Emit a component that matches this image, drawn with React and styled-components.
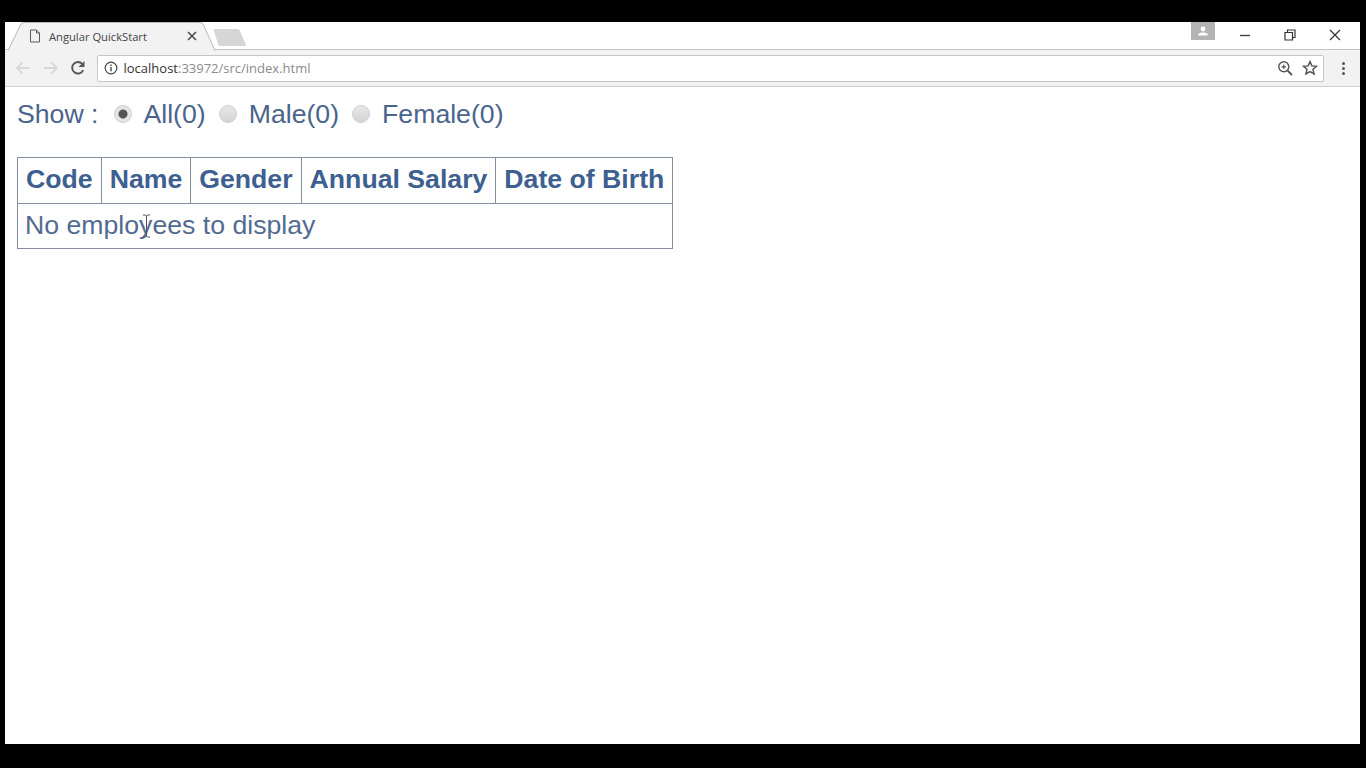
import React from 'react'
import styled, {createGlobalStyle} from 'styled-components'

const Global = createGlobalStyle`
html, body {
    margin: 0;
    height: 100%;
    background: #000;
    overflow: hidden;
}
#root {
    height: 100%;
}
`

function Radio({checked}) {
    return <RadioDot checked={checked} />
}

function App() {
    return (
        <Screen>
            <Global />
            <Browser>
                <TabStrip>
                    <Tab>
                        <TabShape width="208" height="29" viewBox="0 0 208 29">
                            <path d="M0 28.5 L13 2 Q14 0.5 15 0.5 L193 0.5 Q194 0.5 195 2 L207 28.5" fill="#f2f2f2" stroke="#b9b9b9" />
                        </TabShape>
                        <PageIcon width="12" height="14" viewBox="0 0 12 14">
                            <path d="M1.5 1h6l3 3v9h-9z M7.5 1v3h3" fill="none" stroke="#5a5a5a" strokeWidth="1" />
                        </PageIcon>
                        <TabTitle>Angular QuickStart</TabTitle>
                        <TabClose width="10" height="10" viewBox="0 0 10 10">
                            <path d="M1 1l8 8M9 1l-8 8" stroke="#4d4d4d" strokeWidth="1.6" />
                        </TabClose>
                    </Tab>
                    <NewTab width="36" height="20" viewBox="0 0 36 20">
                        <path d="M0.5 2 Q0.5 1 2 1 L25 1 Q26 1 26.5 2 L33 17 Q33.5 18 32 18 L7 18 Q6 18 5.5 17 Z" fill="#d6d6d6" />
                    </NewTab>
                    <Spacer />
                    <Profile>
                        <svg width="12" height="10" viewBox="0 0 12 10">
                            <circle cx="6" cy="3" r="2.4" fill="#fff" />
                            <path d="M1 9.5 Q1 6.5 6 6.5 Q11 6.5 11 9.5z" fill="#fff" />
                        </svg>
                    </Profile>
                    <WinButton>
                        <svg width="12" height="12" viewBox="0 0 12 12"><path d="M1 6.5h10" stroke="#444" strokeWidth="1.4" /></svg>
                    </WinButton>
                    <WinButton>
                        <svg width="12" height="12" viewBox="0 0 12 12">
                            <path d="M1 3.5h7.5v7.5H1z M3.5 3.5V1H11v7.5H8.5" fill="none" stroke="#333" strokeWidth="1.2" />
                        </svg>
                    </WinButton>
                    <WinButton>
                        <svg width="12" height="12" viewBox="0 0 12 12"><path d="M1 1l10 10M11 1L1 11" stroke="#333" strokeWidth="1.2" /></svg>
                    </WinButton>
                </TabStrip>
                <Toolbar>
                    <NavIcon width="16" height="14" viewBox="0 0 16 14">
                        <path d="M15 7H2M7.5 1.5L2 7l5.5 5.5" fill="none" stroke="#d8d8d8" strokeWidth="1.8" />
                    </NavIcon>
                    <NavIcon width="16" height="14" viewBox="0 0 16 14">
                        <path d="M1 7h13M8.5 1.5L14 7l-5.5 5.5" fill="none" stroke="#d8d8d8" strokeWidth="1.8" />
                    </NavIcon>
                    <NavIcon width="16" height="16" viewBox="0 0 16 16">
                        <path d="M13.2 10.2A5.8 5.8 0 1 1 12.2 3.8" fill="none" stroke="#555" strokeWidth="1.9" />
                        <path d="M14.5 1v6h-6z" fill="#555" />
                    </NavIcon>
                    <Omnibox>
                        <svg width="14" height="14" viewBox="0 0 14 14">
                            <circle cx="7" cy="7" r="5.8" fill="none" stroke="#444" strokeWidth="1.2" />
                            <path d="M7 6v4.2M7 3.6v1.4" stroke="#444" strokeWidth="1.4" />
                        </svg>
                        <Url>localhost<UrlRest>:33972/src/index.html</UrlRest></Url>
                        <Spacer />
                        <svg width="16" height="16" viewBox="0 0 16 16">
                            <circle cx="6.8" cy="6.8" r="5" fill="none" stroke="#555" strokeWidth="1.4" />
                            <path d="M10.5 10.5l4.5 4.5" stroke="#555" strokeWidth="1.8" />
                            <path d="M4.5 6.8h4.6M6.8 4.5v4.6" stroke="#555" strokeWidth="1.2" />
                        </svg>
                        <svg width="16" height="16" viewBox="0 0 16 16">
                            <path d="M8 1.6l1.9 4.3 4.6.4-3.5 3 1.1 4.6L8 11.5l-4.1 2.4L5 9.3l-3.5-3 4.6-.4z" fill="none" stroke="#555" strokeWidth="1.5" />
                        </svg>
                    </Omnibox>
                    <MenuDots>
                        <Dot /><Dot /><Dot />
                    </MenuDots>
                </Toolbar>
                <Page>
                    <Filter>
                        <FilterLabel>Show :</FilterLabel>
                        <Radio checked />
                        <Option>All(0)</Option>
                        <Radio />
                        <Option>Male(0)</Option>
                        <Radio />
                        <Option>Female(0)</Option>
                    </Filter>
                    <Table>
                        <thead>
                            <tr>
                                <Th>Code</Th>
                                <Th>Name</Th>
                                <Th>Gender</Th>
                                <Th>Annual Salary</Th>
                                <Th>Date of Birth</Th>
                            </tr>
                        </thead>
                        <tbody>
                            <tr>
                                <Td colSpan="5">
                                    No employees to display
                                    <Cursor width="9" height="24" viewBox="0 0 9 24">
                                        <path d="M1 1h2.5L4.5 2 5.5 1H8M4.5 2v20M1 23h2.5l1-1 1 1H8" fill="none" stroke="#555" strokeWidth="1" />
                                    </Cursor>
                                </Td>
                            </tr>
                        </tbody>
                    </Table>
                </Page>
            </Browser>
        </Screen>
    )
}
export default App

const Screen = styled.div`
height: 768px;
box-sizing: border-box;
padding: 22px 6px 24px 5px;
background: #000;
`
const Browser = styled.div`
height: 100%;
display: flex;
flex-direction: column;
background: #fff;
`
const TabStrip = styled.div`
height: 27px;
flex: none;
display: flex;
align-items: flex-start;
padding-right: 3px;
background: #fff;
border-bottom: 1px solid #c4c4c4;
`
const Tab = styled.div`
position: relative;
width: 206px;
height: 28px;
margin-left: 3px;
display: flex;
align-items: center;
padding-left: 21px;
box-sizing: border-box;
font-family: "Open Sans", "Liberation Sans", sans-serif;
color: #444;
`
const TabShape = styled.svg`
position: absolute;
left: 0;
top: 0;
`
const PageIcon = styled.svg`
position: relative;
flex: none;
`
const TabTitle = styled.span`
position: relative;
margin-left: 8px;
font-size: 11.2px;
white-space: nowrap;
`
const TabClose = styled.svg`
position: relative;
margin-left: 40px;
flex: none;
`
const NewTab = styled.svg`
margin: 6px 0 0 -1px;
flex: none;
`
const Spacer = styled.div`
flex: 1;
`
const Profile = styled.div`
width: 24px;
height: 18px;
margin-right: 7px;
background: #b4b4b4;
display: flex;
align-items: center;
justify-content: center;
`
const WinButton = styled.div`
width: 45px;
height: 26px;
display: flex;
align-items: center;
justify-content: center;
`
const Toolbar = styled.div`
height: 36px;
flex: none;
display: flex;
align-items: center;
gap: 11.5px;
padding: 0 12px 0 10px;
background: #f2f2f2;
border-bottom: 1px solid #cfcfcf;
`
const NavIcon = styled.svg`
flex: none;
`
const Omnibox = styled.div`
flex: 1;
height: 27px;
margin-left: -1px;
display: flex;
align-items: center;
gap: 9px;
padding: 0 5px 0 6px;
box-sizing: border-box;
background: #fff;
border: 1px solid #c6c6c6;
border-radius: 2px;
`
const Url = styled.span`
margin-left: -3px;
font: 13px "Open Sans", "Liberation Sans", sans-serif;
color: #333;
`
const UrlRest = styled.span`
color: #8a8a8a;
`
const MenuDots = styled.div`
display: flex;
flex-direction: column;
gap: 2px;
margin-left: 4px;
padding: 0 3px;
`
const Dot = styled.span`
width: 3px;
height: 3px;
border-radius: 50%;
background: #555;
`
const Page = styled.div`
flex: 1;
padding: 9px 12px;
font-family: "Liberation Sans", Arial, sans-serif;
color: #4a648c;
background: #fff;
`
const Filter = styled.div`
display: flex;
align-items: center;
height: 36px;
font-size: 26.67px;
`
const FilterLabel = styled.span`
margin-right: 15px;
`
const RadioDot = styled.span`
width: 18px;
height: 18px;
flex: none;
box-sizing: border-box;
border-radius: 50%;
background: ${props => props.checked
    ? 'radial-gradient(circle, #555 0 4px, #e4e4e4 5px)'
    : 'linear-gradient(#e8e8e8, #d4d4d4)'};
border: 1px solid #cfcfcf;
margin-right: 12px;
`
const Option = styled.span`
margin-right: 13px;
`
const Table = styled.table`
margin-top: 25px;
border-collapse: collapse;
border: 1px solid #858da0;
`
const Th = styled.th`
border: 1px solid #858da0;
padding: 0 8px 3px;
height: 46px;
box-sizing: border-box;
font-size: 26.67px;
font-weight: bold;
color: #3d6090;
white-space: nowrap;
`
const Td = styled.td`
position: relative;
border: 1px solid #858da0;
padding: 0 7px 1px;
height: 45px;
box-sizing: border-box;
font-size: 26.67px;
color: #526b90;
`
const Cursor = styled.svg`
position: absolute;
left: 124px;
top: 10px;
`
